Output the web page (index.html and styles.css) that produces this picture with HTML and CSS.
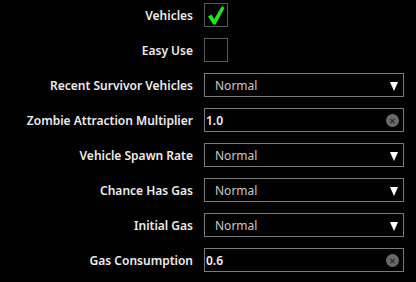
FILE: index.html
```html
<!DOCTYPE html>
<html>
<head>
<meta charset="utf-8">
<link rel="stylesheet" href="styles.css">
</head>
<body>
<div class="form">
  <div class="row">
    <div class="label">Vehicles</div>
    <div class="check">
      <svg class="tick" width="18" height="20" viewBox="0 0 18 20"><path d="M1 11.5 L4.5 9.5 L7.2 14 L15 1 L17.5 3 L8.6 19.5 L6.2 19.5 Z" fill="#1ee61e"/></svg>
    </div>
  </div>
  <div class="row">
    <div class="label">Easy Use</div>
    <div class="check"></div>
  </div>
  <div class="row">
    <div class="label">Recent Survivor Vehicles</div>
    <div class="select"><span>Normal</span><span class="arrow"></span></div>
  </div>
  <div class="row">
    <div class="label">Zombie Attraction Multiplier</div>
    <div class="input"><span>1.0</span><span class="clear">&#x2715;</span></div>
  </div>
  <div class="row">
    <div class="label">Vehicle Spawn Rate</div>
    <div class="select"><span>Normal</span><span class="arrow"></span></div>
  </div>
  <div class="row">
    <div class="label">Chance Has Gas</div>
    <div class="select"><span>Normal</span><span class="arrow"></span></div>
  </div>
  <div class="row">
    <div class="label">Initial Gas</div>
    <div class="select"><span>Normal</span><span class="arrow"></span></div>
  </div>
  <div class="row">
    <div class="label">Gas Consumption</div>
    <div class="input"><span>0.6</span><span class="clear">&#x2715;</span></div>
  </div>
</div>
</body>
</html>
```

FILE: styles.css
```css
html, body {
  margin: 0;
  padding: 0;
  background: #030202;
  width: 416px;
  height: 282px;
  overflow: hidden;
}
body {
  font-family: "Noto Sans", "Open Sans", sans-serif;
  font-size: 12px;
  font-weight: 600;
  color: #ececec;
}
.form {
  display: flex;
  flex-direction: column;
  gap: 11px;
  padding-top: 3px;
}
.row {
  display: flex;
  align-items: center;
  height: 24px;
}
.label {
  box-sizing: border-box;
  width: 204px;
  padding-right: 11px;
  text-align: right;
}
.check {
  width: 24px;
  height: 24px;
  box-sizing: border-box;
  border: 1px solid #5a5a5a;
  display: flex;
  align-items: center;
  justify-content: center;
}
.select, .input {
  width: 200px;
  height: 24px;
  box-sizing: border-box;
  border: 1px solid #7a7a7a;
  display: flex;
  align-items: center;
  justify-content: space-between;
}
.select {
  padding: 0 5px 0 10px;
  color: #c8c8c8;
  font-weight: 400;
}
.input {
  padding: 0 4px 0 1px;
  color: #f0f0f0;
  font-weight: 600;
}
.arrow {
  width: 0;
  height: 0;
  border-left: 4px solid transparent;
  border-right: 4px solid transparent;
  border-top: 9px solid #ffffff;
  margin-top: 2px;
}
.clear {
  width: 13px;
  height: 13px;
  border-radius: 50%;
  background: #6a6a6a;
  color: #2a2a2a;
  font-size: 8px;
  font-weight: 700;
  line-height: 13px;
  text-align: center;
}
```
